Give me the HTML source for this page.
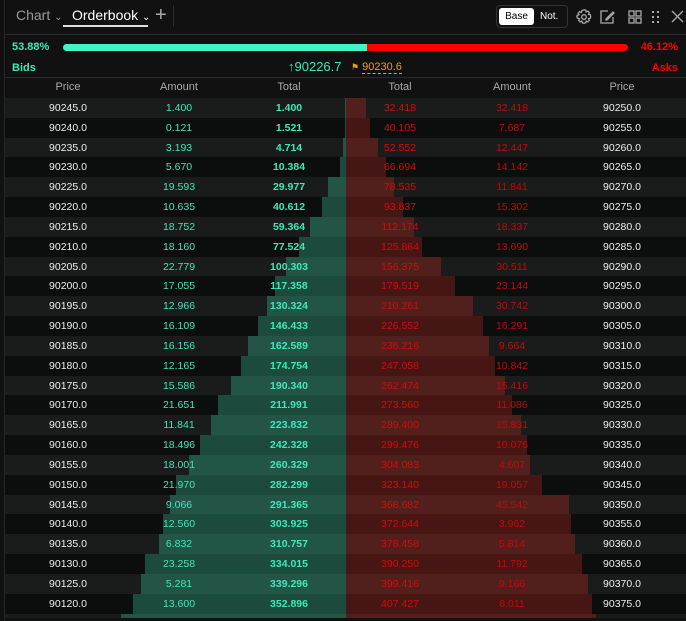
<!DOCTYPE html>
<html><head><meta charset="utf-8"><style>
*{margin:0;padding:0;box-sizing:border-box}
html,body{width:686px;height:621px;overflow:hidden}
body{background:#111;font-family:"Liberation Sans",sans-serif;position:relative;color:#ddd}
.lb{position:absolute;left:4px;top:0;width:1px;height:621px;background:#262626}
.top{position:absolute;left:5px;top:0;right:0;height:35px;border-bottom:1px solid #2a2a2a}
.tab{position:absolute;top:7px;font-size:14px}
.sum{position:absolute;font-size:11px;font-weight:bold}
.bar{position:absolute;top:44px;height:7px;border-radius:4px;overflow:hidden;left:63px;width:565px;background:#f00}
.bar i{position:absolute;left:0;top:0;height:7px;width:304px;background:#3ef5c8}
.hd{position:absolute;left:5px;right:0;top:77px;height:21px;border-top:1px solid #2a2a2a;font-size:11px;color:#aaa}
.hd span,.r span{position:absolute;width:110px;margin-left:-55px;text-align:center;z-index:2}
.hd span{top:3px}
#rows{position:absolute;left:5px;top:98px;right:0;height:523px;overflow:hidden}
.r{position:relative;height:19.84px;font-size:10.5px;background:#0c0d0d}
.r:nth-child(odd){background:#1a1b1b}
.r span{top:4px}
.r .b{position:absolute;right:340px;top:0;height:100%;background:#1c4a3d}
.r .a{position:absolute;left:341px;top:0;height:100%;background:#461614}
.r:nth-child(odd) .b{background:#235547}
.r:nth-child(odd) .a{background:#51201d}
.p{left:63px;color:#eee}.am{left:174px;color:#3ee8b8}.t{left:284px;color:#3ee8b8;font-weight:bold}
.t2{left:395px;color:#d80a0a}.am2{left:507px;color:#c80808}.p2{left:617px;color:#eee}
</style></head><body>
<div class="lb"></div>
<div class="top">
<div class="tab" style="left:11px;color:#999">Chart <span style="font-size:10px">&#8964;</span></div>
<div class="tab" style="left:67px;color:#fff">Orderbook <span style="font-size:10px">&#8964;</span></div>
<div style="position:absolute;left:58px;top:25px;width:85px;height:2px;background:#ddd"></div>
<div style="position:absolute;left:150px;top:4px;font-size:20px;color:#aaa">+</div>
<div style="position:absolute;left:168px;top:5px;width:1px;height:22px;background:#2a2a2a"></div>
<div style="position:absolute;left:491px;top:5px;width:72px;height:23px;border:1px solid #333;border-radius:4px"></div>
<div style="position:absolute;left:494px;top:8px;width:35px;height:17px;background:#fff;border-radius:3px;color:#000;font-size:10px;text-align:center;line-height:17px">Base</div>
<div style="position:absolute;left:535px;top:11px;color:#fff;font-size:10px">Not.</div>
<svg style="position:absolute;left:571px;top:9px" width="112" height="16" fill="none" stroke="#aaa" stroke-width="1.3">
<circle cx="8" cy="8" r="2.3"/><path d="M8 .8l1.7.4.5 1.8 1.7-.8 1.4 1.4-.8 1.7 1.8.5.4 1.7-.4 1.7-1.8.5.8 1.7-1.4 1.4-1.7-.8-.5 1.8-1.7.4-1.7-.4-.5-1.8-1.7.8-1.4-1.4.8-1.7-1.8-.5L.8 8l.4-1.7 1.8-.5-.8-1.7 1.4-1.4 1.7.8.5-1.8z"/>
<path d="M32 2h-7v12h12V8"/><path d="M30 10l7-7 1 1-7 7h-1z"/>
<rect x="53" y="2" width="5" height="5"/><rect x="60" y="2" width="5" height="5"/><rect x="53" y="9" width="5" height="5"/><rect x="60" y="9" width="5" height="5"/>
<g fill="#aaa" stroke="none"><rect x="76" y="2" width="2" height="2"/><rect x="81" y="2" width="2" height="2"/><rect x="76" y="7" width="2" height="2"/><rect x="81" y="7" width="2" height="2"/><rect x="76" y="12" width="2" height="2"/><rect x="81" y="12" width="2" height="2"/></g>
<path d="M96 2l11 11M107 2L96 13"/>
</svg>
</div>
<div class="sum" style="left:12px;top:41px;color:#3ee8b8">53.88%</div>
<div class="bar"><i></i></div>
<div class="sum" style="right:8px;top:41px;color:#f00">46.12%</div>
<div class="sum" style="left:12px;top:62px;color:#3ee8b8">Bids</div>
<div style="position:absolute;left:288px;top:59px;font-size:13px;color:#3ee8b8">&#8593;90226.7</div>
<div style="position:absolute;left:351px;top:61px;font-size:11px;color:#e8a020"><span style="font-size:9px">&#9873;</span> <span style="border-bottom:1px dashed #e8a020">90230.6</span></div>
<div class="sum" style="right:8px;top:62px;color:#f00">Asks</div>
<div class="hd"><span style="left:63px">Price</span><span style="left:174px">Amount</span><span style="left:284px">Total</span><span style="left:395px">Total</span><span style="left:507px">Amount</span><span style="left:617px">Price</span></div>
<div id="rows">
<div class="r"><i class="b" style="width:1px"></i><i class="a" style="width:20px"></i><span class="p">90245.0</span><span class="am">1.400</span><span class="t">1.400</span><span class="t2">32.418</span><span class="am2">32.418</span><span class="p2">90250.0</span></div>
<div class="r"><i class="b" style="width:1px"></i><i class="a" style="width:24px"></i><span class="p">90240.0</span><span class="am">0.121</span><span class="t">1.521</span><span class="t2">40.105</span><span class="am2">7.687</span><span class="p2">90255.0</span></div>
<div class="r"><i class="b" style="width:3px"></i><i class="a" style="width:32px"></i><span class="p">90235.0</span><span class="am">3.193</span><span class="t">4.714</span><span class="t2">52.552</span><span class="am2">12.447</span><span class="p2">90260.0</span></div>
<div class="r"><i class="b" style="width:6px"></i><i class="a" style="width:40px"></i><span class="p">90230.0</span><span class="am">5.670</span><span class="t">10.384</span><span class="t2">66.694</span><span class="am2">14.142</span><span class="p2">90265.0</span></div>
<div class="r"><i class="b" style="width:18px"></i><i class="a" style="width:48px"></i><span class="p">90225.0</span><span class="am">19.593</span><span class="t">29.977</span><span class="t2">78.535</span><span class="am2">11.841</span><span class="p2">90270.0</span></div>
<div class="r"><i class="b" style="width:24px"></i><i class="a" style="width:57px"></i><span class="p">90220.0</span><span class="am">10.635</span><span class="t">40.612</span><span class="t2">93.837</span><span class="am2">15.302</span><span class="p2">90275.0</span></div>
<div class="r"><i class="b" style="width:36px"></i><i class="a" style="width:68px"></i><span class="p">90215.0</span><span class="am">18.752</span><span class="t">59.364</span><span class="t2">112.174</span><span class="am2">18.337</span><span class="p2">90280.0</span></div>
<div class="r"><i class="b" style="width:47px"></i><i class="a" style="width:76px"></i><span class="p">90210.0</span><span class="am">18.160</span><span class="t">77.524</span><span class="t2">125.864</span><span class="am2">13.690</span><span class="p2">90285.0</span></div>
<div class="r"><i class="b" style="width:60px"></i><i class="a" style="width:95px"></i><span class="p">90205.0</span><span class="am">22.779</span><span class="t">100.303</span><span class="t2">156.375</span><span class="am2">30.511</span><span class="p2">90290.0</span></div>
<div class="r"><i class="b" style="width:71px"></i><i class="a" style="width:109px"></i><span class="p">90200.0</span><span class="am">17.055</span><span class="t">117.358</span><span class="t2">179.519</span><span class="am2">23.144</span><span class="p2">90295.0</span></div>
<div class="r"><i class="b" style="width:79px"></i><i class="a" style="width:127px"></i><span class="p">90195.0</span><span class="am">12.966</span><span class="t">130.324</span><span class="t2">210.261</span><span class="am2">30.742</span><span class="p2">90300.0</span></div>
<div class="r"><i class="b" style="width:88px"></i><i class="a" style="width:137px"></i><span class="p">90190.0</span><span class="am">16.109</span><span class="t">146.433</span><span class="t2">226.552</span><span class="am2">16.291</span><span class="p2">90305.0</span></div>
<div class="r"><i class="b" style="width:98px"></i><i class="a" style="width:143px"></i><span class="p">90185.0</span><span class="am">16.156</span><span class="t">162.589</span><span class="t2">236.216</span><span class="am2">9.664</span><span class="p2">90310.0</span></div>
<div class="r"><i class="b" style="width:105px"></i><i class="a" style="width:149px"></i><span class="p">90180.0</span><span class="am">12.165</span><span class="t">174.754</span><span class="t2">247.058</span><span class="am2">10.842</span><span class="p2">90315.0</span></div>
<div class="r"><i class="b" style="width:115px"></i><i class="a" style="width:159px"></i><span class="p">90175.0</span><span class="am">15.586</span><span class="t">190.340</span><span class="t2">262.474</span><span class="am2">15.416</span><span class="p2">90320.0</span></div>
<div class="r"><i class="b" style="width:128px"></i><i class="a" style="width:166px"></i><span class="p">90170.0</span><span class="am">21.651</span><span class="t">211.991</span><span class="t2">273.560</span><span class="am2">11.086</span><span class="p2">90325.0</span></div>
<div class="r"><i class="b" style="width:135px"></i><i class="a" style="width:175px"></i><span class="p">90165.0</span><span class="am">11.841</span><span class="t">223.832</span><span class="t2">289.400</span><span class="am2">15.831</span><span class="p2">90330.0</span></div>
<div class="r"><i class="b" style="width:146px"></i><i class="a" style="width:181px"></i><span class="p">90160.0</span><span class="am">18.496</span><span class="t">242.328</span><span class="t2">299.476</span><span class="am2">10.076</span><span class="p2">90335.0</span></div>
<div class="r"><i class="b" style="width:157px"></i><i class="a" style="width:184px"></i><span class="p">90155.0</span><span class="am">18.001</span><span class="t">260.329</span><span class="t2">304.083</span><span class="am2">4.607</span><span class="p2">90340.0</span></div>
<div class="r"><i class="b" style="width:170px"></i><i class="a" style="width:196px"></i><span class="p">90150.0</span><span class="am">21.970</span><span class="t">282.299</span><span class="t2">323.140</span><span class="am2">19.057</span><span class="p2">90345.0</span></div>
<div class="r"><i class="b" style="width:176px"></i><i class="a" style="width:223px"></i><span class="p">90145.0</span><span class="am">9.066</span><span class="t">291.365</span><span class="t2">368.682</span><span class="am2">45.542</span><span class="p2">90350.0</span></div>
<div class="r"><i class="b" style="width:183px"></i><i class="a" style="width:225px"></i><span class="p">90140.0</span><span class="am">12.560</span><span class="t">303.925</span><span class="t2">372.644</span><span class="am2">3.962</span><span class="p2">90355.0</span></div>
<div class="r"><i class="b" style="width:187px"></i><i class="a" style="width:229px"></i><span class="p">90135.0</span><span class="am">6.832</span><span class="t">310.757</span><span class="t2">378.458</span><span class="am2">5.814</span><span class="p2">90360.0</span></div>
<div class="r"><i class="b" style="width:201px"></i><i class="a" style="width:236px"></i><span class="p">90130.0</span><span class="am">23.258</span><span class="t">334.015</span><span class="t2">390.250</span><span class="am2">11.792</span><span class="p2">90365.0</span></div>
<div class="r"><i class="b" style="width:205px"></i><i class="a" style="width:242px"></i><span class="p">90125.0</span><span class="am">5.281</span><span class="t">339.296</span><span class="t2">399.416</span><span class="am2">9.166</span><span class="p2">90370.0</span></div>
<div class="r"><i class="b" style="width:213px"></i><i class="a" style="width:246px"></i><span class="p">90120.0</span><span class="am">13.600</span><span class="t">352.896</span><span class="t2">407.427</span><span class="am2">8.011</span><span class="p2">90375.0</span></div>
<div class="r" style="height:4px"><i class="b" style="width:225px"></i><i class="a" style="width:250px"></i></div>
</div>
</body></html>
